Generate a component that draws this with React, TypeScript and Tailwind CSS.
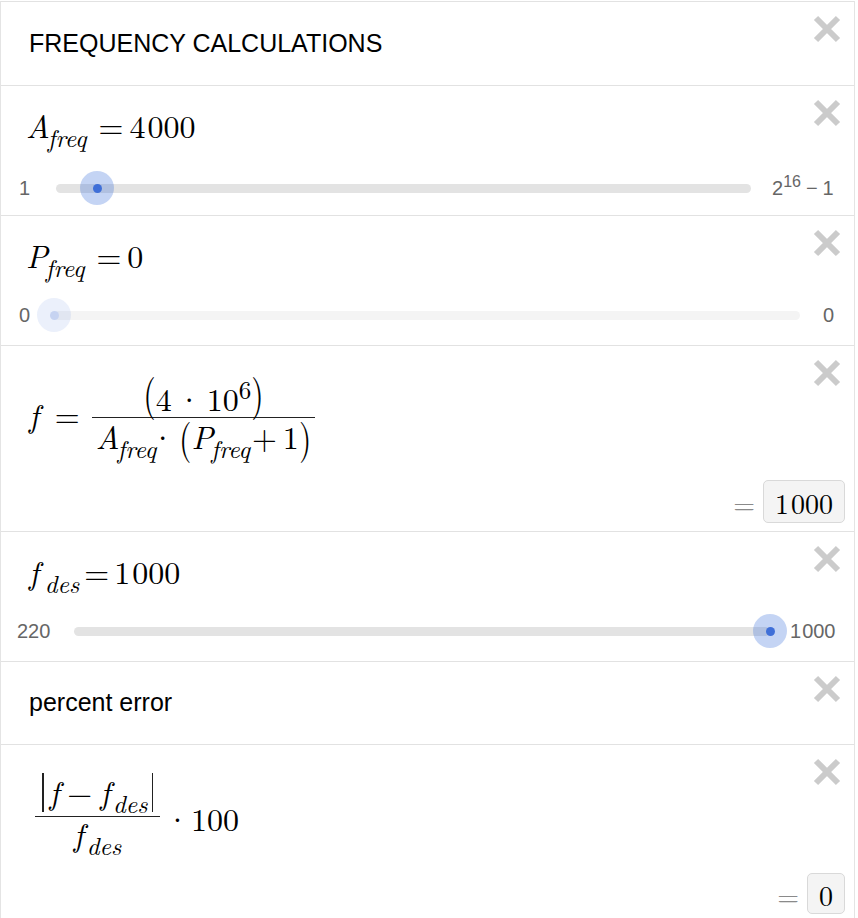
import type { ReactNode } from "react";

const serif = "font-['Latin_Modern_Roman','LM_Roman_10','Liberation_Serif',serif]";
const sans = "font-['Liberation_Sans',Arial,sans-serif]";

const CloseX = () => (
  <svg
    className="absolute right-[13px] top-[13px] h-[28px] w-[28px]"
    viewBox="0 0 28 28"
  >
    <path d="M3 3L25 25M25 3L3 25" stroke="#cbcbcb" strokeWidth="6" />
  </svg>
);

const Sub = ({ children, className = "" }: { children: ReactNode; className?: string }) => (
  <span className={`relative top-[9px] text-[25px] italic ${className}`}>{children}</span>
);

type SliderProps = {
  left: ReactNode;
  right: ReactNode;
  leftCls: string;
  rightCls: string;
  pct: number;
  faded?: boolean;
  className?: string;
};

const Slider = ({ left, right, leftCls, rightCls, pct, faded, className = "" }: SliderProps) => (
  <div className={`flex h-[34px] items-center ${sans} text-[20px] leading-none text-[#666] ${className}`}>
    <div className={`shrink-0 ${leftCls}`}>{left}</div>
    <div className={`relative h-[9px] flex-1 rounded-full ${faded ? "bg-[#f4f4f4]" : "bg-[#e3e3e3]"}`}>
      <div
        className={`absolute top-1/2 flex h-[34px] w-[34px] -translate-x-1/2 -translate-y-1/2 items-center justify-center rounded-full ${
          faded ? "bg-[#3d6fd9]/10" : "bg-[#3d6fd9]/30"
        }`}
        style={{ left: `${pct}%` }}
      >
        <div className={`h-[9px] w-[9px] rounded-full ${faded ? "bg-[#c6d3f1]" : "bg-[#3f6fd8]"}`} />
      </div>
    </div>
    <div className={`shrink-0 ${rightCls}`}>{right}</div>
  </div>
);

const Result = ({ children, className = "" }: { children: ReactNode; className?: string }) => (
  <div className={`flex items-center justify-end pr-[9px] ${serif} text-[28px] leading-[28px]`}>
    <span className="mr-[8px] text-[#8a8a8a]">=</span>
    <div
      className={`flex items-center rounded-[5px] border border-[#d9d9d9] bg-[#f4f4f4] px-[11px] ${className}`}
    >
      {children}
    </div>
  </div>
);

const Row = ({ children, className = "" }: { children: ReactNode; className?: string }) => (
  <div className={`relative border-t border-[#e2e2e2] ${className}`}>
    {children}
    <CloseX />
  </div>
);

export default function App() {
  return (
    <div className="min-h-[918px] bg-white pt-px">
      <div className="w-[855px] border-x border-[#e4e4e4] text-black">
        {/* note */}
        <Row className={`flex h-[84px] items-center pl-[28px] ${sans} text-[25px]`}>
          FREQUENCY CALCULATIONS
        </Row>

        {/* A_freq slider */}
        <Row className="h-[130px]">
          <div className={`whitespace-nowrap pl-[25px] pt-[23px] ${serif} text-[32px] leading-[32px]`}>
            <i>A</i>
            <Sub className="ml-[-2px]">freq</Sub>
            <span className="ml-[12px] mr-[6px]">=</span>
            4<span className="ml-[2px]">000</span>
          </div>
          <Slider
            className="mt-[27px]"
            pct={5.9}
            leftCls="w-[55px] pl-[18px]"
            rightCls="w-[103px] pl-[21px]"
            left="1"
            right={
              <span className="whitespace-nowrap">
                2<span className="relative top-[-8px] text-[16px]">16</span>
                <span className="ml-[5px]">−</span>
                <span className="ml-[5px]">1</span>
              </span>
            }
          />
        </Row>

        {/* P_freq slider */}
        <Row className="h-[130px]">
          <div className={`whitespace-nowrap pl-[25px] pt-[23px] ${serif} text-[32px] leading-[32px]`}>
            <i>P</i>
            <Sub className="ml-[-2px]">freq</Sub>
            <span className="ml-[12px] mr-[6px]">=</span>0
          </div>
          <Slider
            className="mt-[24px]"
            pct={0}
            faded
            leftCls="w-[53px] pl-[18px]"
            rightCls="w-[54px] pl-[23px]"
            left="0"
            right="0"
          />
        </Row>

        {/* f = ... */}
        <Row className="flex h-[186px] flex-col justify-between pb-[8px]">
          <div className={`flex items-start whitespace-nowrap pl-[28px] pt-[36px] ${serif} text-[32px] leading-[32px]`}>
            <div className="mt-[16px]">
              <i>f</i>
              <span className="ml-[16px] mr-[12px]">=</span>
            </div>
            <div className="inline-flex flex-col items-center">
              <div className="px-[6px]">
                <span className="inline-block -translate-y-[7px] scale-y-[1.35]">(</span>
                4<span className="mx-[5px]">·</span>10
                <span className="relative top-[-12px] text-[25px]">6</span>
                <span className="inline-block -translate-y-[7px] scale-y-[1.35]">)</span>
              </div>
              <div className="h-px w-full bg-[#222]" />
              <div className="px-[4px] pt-[2px]">
                <i>A</i>
                <Sub className="ml-[-2px]">freq</Sub>
                <span className="ml-[-6px] mr-[4px]">·</span>
                <span className="inline-block scale-y-[1.3]">(</span>
                <i>P</i>
                <Sub className="ml-[-2px]">freq</Sub>
                <span className="ml-[2px] mr-[6px]">+</span>1
                <span className="inline-block scale-y-[1.3]">)</span>
              </div>
            </div>
          </div>
          <Result className="h-[43px]">
            1<span className="ml-[2px]">000</span>
          </Result>
        </Row>

        {/* f_des slider */}
        <Row className="h-[130px]">
          <div className={`whitespace-nowrap pl-[28px] pt-[23px] ${serif} text-[32px] leading-[32px]`}>
            <i>f</i>
            <Sub className="ml-[6px]">des</Sub>
            <span className="ml-[5px] mr-[5px]">=</span>
            1<span className="ml-[2px]">000</span>
          </div>
          <Slider
            className="mt-[24px]"
            pct={100}
            leftCls="w-[73px] pl-[16px]"
            rightCls="w-[84px] pl-[20px]"
            left="220"
            right={
              <span>
                1<span className="ml-[1px]">000</span>
              </span>
            }
          />
        </Row>

        {/* note */}
        <Row className={`flex h-[83px] items-center pl-[28px] ${sans} text-[25px]`}>percent error</Row>

        {/* percent error expression */}
        <Row className="flex h-[174px] flex-col justify-between pb-[4px]">
          <div className={`flex items-start whitespace-nowrap pl-[34px] pt-[28px] ${serif} text-[32px] leading-[32px]`}>
            <div className="inline-flex flex-col items-center">
              <div className="flex items-center px-[7px] pb-[4px]">
                <span className="h-[39px] w-[1.5px] bg-[#222]" />
                <span className="pl-[6px] pr-[4px]">
                  <i>f</i>
                  <span className="ml-[8px] mr-[8px]">−</span>
                  <i>f</i>
                  <Sub className="ml-[3px]">des</Sub>
                </span>
                <span className="h-[39px] w-[1.5px] bg-[#222]" />
              </div>
              <div className="h-px w-full bg-[#222]" />
              <div>
                <i>f</i>
                <Sub className="ml-[3px]">des</Sub>
              </div>
            </div>
            <div className="ml-[5px] mt-[29px]">
              <span className="mr-[1px]">·</span>100
            </div>
          </div>
          <Result className="h-[41px]">0</Result>
        </Row>
      </div>
    </div>
  );
}
